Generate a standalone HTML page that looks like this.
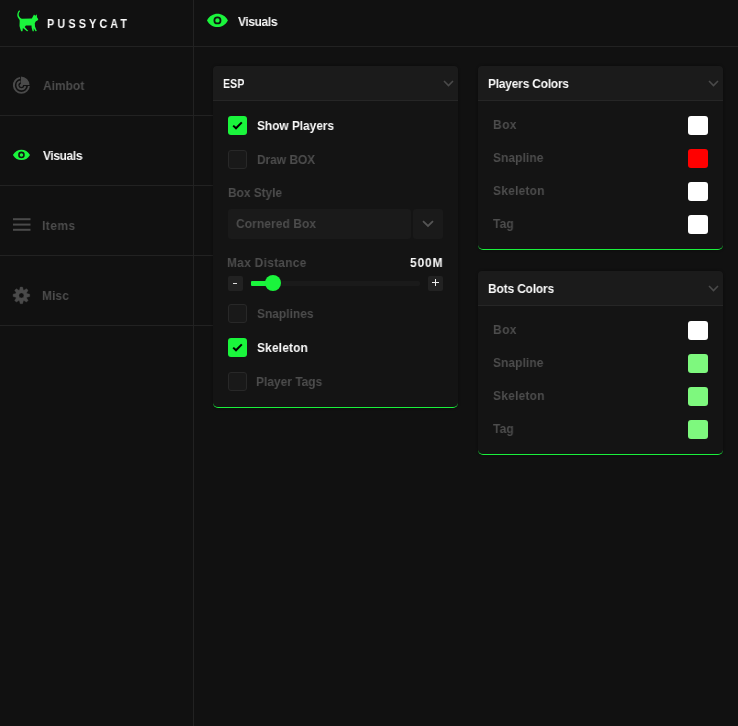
<!DOCTYPE html>
<html><head><meta charset="utf-8">
<style>
*{box-sizing:border-box;margin:0;padding:0}
html,body{width:738px;height:726px;overflow:hidden;background:#111111;font-family:"Liberation Sans",sans-serif;font-weight:bold;font-size:13px}
.a{position:absolute}
.hl{position:absolute;height:1px;background:#222222}
.vl{position:absolute;width:1px;background:#222222}
.t{position:absolute;white-space:nowrap;line-height:1;letter-spacing:0;margin-top:-1px;will-change:transform;transform:scaleX(0.92);transform-origin:0 0}
.g{color:#4d4d4d}
.w{color:#fafafa}
.panel{position:absolute;background:#141414;border-radius:5px;box-shadow:0 0 3px rgba(0,0,0,0.45);border-bottom:1px solid #1af03c}
.ph{position:absolute;left:0;top:0;right:0;height:35px;background:#1b1b1b;border-bottom:1px solid #262626;border-radius:4px 4px 0 0}
.cb{position:absolute;width:19px;height:19px;border-radius:3px;background:#191919;border:1px solid #282828}
.cb.on{background:#1af53c;border:none}
.sw{position:absolute;width:20px;height:19px;border-radius:3px}
</style></head><body>
<!-- lines -->
<div class="vl" style="left:193px;top:0;height:726px"></div>
<div class="hl" style="left:0;top:46px;width:738px"></div>
<div class="hl" style="left:0;top:115px;width:213px"></div>
<div class="hl" style="left:0;top:185px;width:213px"></div>
<div class="hl" style="left:0;top:255px;width:213px"></div>
<div class="hl" style="left:0;top:325px;width:213px"></div>

<!-- brand -->
<svg class="a" style="left:16px;top:10px" width="24" height="22" viewBox="16 10 24 22"><path fill="#1af53c" d="M19.0 10.6C19.6 10.3 20.3 11.0 19.9 11.6C18.9 12.7 18.5 14.0 18.8 15.4C19.2 16.9 20.4 18.0 21.8 18.7L31.8 18.6L34.0 14.4L35.3 15.8L36.8 14.3L37.0 17.2L38.3 19.3L37.5 20.5L35.9 21.3L34.8 23.3L35.0 26.4L36.8 30.9L35.5 31.2L33.7 28.3L33.9 31.2L32.6 31.2L31.6 27.6L31.5 25.4L25.9 25.4L24.7 27.1L28.3 30.9L27.0 31.2L22.9 27.9L22.5 31.2L21.1 31.2L20.2 28.6L19.5 26.0L19.7 20.6C19.6 19.7 19.0 18.9 18.4 18.3C17.3 16.9 17.0 14.7 17.6 13.0C18.0 11.9 18.4 11.0 19.0 10.6Z"/></svg>
<div class="t w" style="left:47px;top:19px;font-size:12px;letter-spacing:3.5px;transform:scaleX(0.9);transform-origin:0 0">PUSSYCAT</div>

<!-- sidebar items -->
<svg class="a" style="left:10px;top:74px" width="24" height="22" viewBox="10 74 24 22"><g fill="none" stroke="#4a4a4a" stroke-width="1.9"><path d="M20.09 77.86A7.55 7.55 0 1 0 28.92 85.96"/><path d="M20.43 81.42A4.0 4.0 0 1 0 25.31 86.13"/></g><circle cx="21.4" cy="85.3" r="1.6" fill="#4a4a4a"/><path d="M20.9 85.1V76.50A8.6 8.6 0 0 1 29.50 85.1Z" fill="#4a4a4a"/></svg>
<div class="t g" style="left:43.4px;top:80px;letter-spacing:0px">Aimbot</div>

<svg class="a" style="left:10px;top:147px" width="22" height="15" viewBox="10 147 22 15"><path fill="#1af53c" fill-rule="evenodd" d="M12.90 154.90C16.66 147.98 26.24 147.98 30.00 154.90C26.24 161.82 16.66 161.82 12.90 154.90ZM18.15 154.90a3.3 3.3 0 1 0 6.60 0a3.3 3.3 0 1 0 -6.60 0ZM19.70 154.90a1.75 1.75 0 1 0 3.50 0a1.75 1.75 0 1 0 -3.50 0Z"/></svg>
<div class="t w" style="left:43.4px;top:150px;letter-spacing:-0.4px">Visuals</div>

<svg class="a" style="left:13px;top:218px" width="18" height="13" viewBox="0 0 18 13">
<g fill="#4a4a4a"><rect x="0" y="0.2" width="17.5" height="2"/><rect x="0" y="5.6" width="17.5" height="2"/><rect x="0" y="10.8" width="17.5" height="2"/></g>
</svg>
<div class="t g" style="left:42.4px;top:220px;letter-spacing:0.5px">Items</div>

<svg class="a" style="left:10px;top:284px" width="24" height="23" viewBox="10 284 24 23"><path fill="#4a4a4a" fill-rule="evenodd" stroke="#4a4a4a" stroke-width="0.4" stroke-linejoin="round" d="M19.51 289.92L20.23 287.08L22.57 287.08L23.29 289.92L23.94 290.19L26.46 288.69L28.11 290.34L26.61 292.86L26.88 293.51L29.72 294.23L29.72 296.57L26.88 297.29L26.61 297.94L28.11 300.46L26.46 302.11L23.94 300.61L23.29 300.88L22.57 303.72L20.23 303.72L19.51 300.88L18.86 300.61L16.34 302.11L14.69 300.46L16.19 297.94L15.92 297.29L13.08 296.57L13.08 294.23L15.92 293.51L16.19 292.86L14.69 290.34L16.34 288.69L18.86 290.19ZM18.9 295.4a2.5 2.5 0 1 0 5.0 0a2.5 2.5 0 1 0 -5.0 0Z"/></svg>
<div class="t g" style="left:42.4px;top:290px;letter-spacing:0.07px">Misc</div>

<!-- content header -->
<svg class="a" style="left:205px;top:11px" width="25" height="18" viewBox="205 11 25 18"><path fill="#1af53c" fill-rule="evenodd" d="M207.00 20.40C211.60 11.62 223.30 11.62 227.90 20.40C223.30 29.18 211.60 29.18 207.00 20.40ZM213.50 20.40a3.95 3.95 0 1 0 7.90 0a3.95 3.95 0 1 0 -7.90 0ZM215.25 20.40a2.2 2.2 0 1 0 4.40 0a2.2 2.2 0 1 0 -4.40 0Z"/></svg>
<div class="t w" style="left:238.4px;top:16px;letter-spacing:-0.4px">Visuals</div>


<!-- ESP panel -->
<div class="panel" style="left:213px;top:66px;width:245px;height:342px"></div>
<div class="a" style="left:213px;top:66px;width:245px;height:34px;background:#1b1b1b;border-radius:4px 4px 0 0"></div>
<div class="hl" style="left:213px;top:100px;width:245px;background:#262626"></div>
<div class="t w" style="left:223px;top:78px;letter-spacing:0.2px;transform:scaleX(0.81)">ESP</div>
<svg class="a" style="left:443px;top:80px" width="11" height="7" viewBox="0 0 11 7"><path d="M1 1L5.5 5.5L10 1" fill="none" stroke="#4a4a4a" stroke-width="1.6"/></svg>

<div class="cb on" style="left:228px;top:116px"></div>
<svg class="a" style="left:228px;top:116px" width="19" height="19" viewBox="0 0 19 19"><path d="M5.2 9.6L8 12.3L13.8 6.4" fill="none" stroke="#000" stroke-width="2"/></svg>
<div class="t w" style="left:257.1px;top:120px;letter-spacing:-0.07px">Show Players</div>

<div class="cb" style="left:228px;top:150px"></div>
<div class="t g" style="left:256.6px;top:154px;letter-spacing:-0.04px">Draw BOX</div>

<div class="t g" style="left:227.8px;top:187px;letter-spacing:-0.06px">Box Style</div>
<div class="a" style="left:228px;top:209px;width:183px;height:30px;background:#1a1a1a;border-radius:3px"></div>
<div class="t g" style="left:236.1px;top:218px;letter-spacing:0.09px">Cornered Box</div>
<div class="a" style="left:413px;top:209px;width:30px;height:30px;background:#1a1a1a;border-radius:3px"></div>
<svg class="a" style="left:422px;top:220px" width="12" height="8" viewBox="0 0 12 8"><path d="M1 1.2L6 6L11 1.2" fill="none" stroke="#555" stroke-width="1.8"/></svg>

<div class="t g" style="left:227.4px;top:257px;letter-spacing:0.29px">Max Distance</div>
<div class="t w" style="left:410.4px;top:257px;letter-spacing:0.95px">500M</div>
<div class="a" style="left:228px;top:276px;width:15px;height:15px;background:#222;border-radius:2px"></div>
<div class="a" style="left:233.3px;top:283px;width:4px;height:1.3px;background:#ddd"></div>
<div class="a" style="left:251px;top:281px;width:169px;height:5px;background:#1a1a1a;border-radius:2px"></div>
<div class="a" style="left:251px;top:281px;width:22px;height:5px;background:#1af53c;border-radius:1px"></div>
<div class="a" style="left:264.6px;top:274.6px;width:16.6px;height:16.6px;background:#1af53c;border-radius:50%"></div>
<div class="a" style="left:428px;top:276px;width:15px;height:15px;background:#222;border-radius:2px"></div>
<div class="a" style="left:432px;top:281.8px;width:7px;height:1.4px;background:#eee"></div>
<div class="a" style="left:434.8px;top:279px;width:1.4px;height:7px;background:#eee"></div>

<div class="cb" style="left:228px;top:304px"></div>
<div class="t g" style="left:257px;top:308px;letter-spacing:0px">Snaplines</div>
<div class="cb on" style="left:228px;top:338px"></div>
<svg class="a" style="left:228px;top:338px" width="19" height="19" viewBox="0 0 19 19"><path d="M5.2 9.6L8 12.3L13.8 6.4" fill="none" stroke="#000" stroke-width="2"/></svg>
<div class="t w" style="left:257px;top:342px;letter-spacing:0.16px">Skeleton</div>
<div class="cb" style="left:228px;top:372px"></div>
<div class="t g" style="left:256px;top:376px;letter-spacing:0px">Player Tags</div>

<!-- Players Colors -->
<div class="panel" style="left:478px;top:66px;width:245px;height:184px"></div>
<div class="a" style="left:478px;top:66px;width:245px;height:34px;background:#1b1b1b;border-radius:4px 4px 0 0"></div>
<div class="hl" style="left:478px;top:100px;width:245px;background:#262626"></div>
<div class="t w" style="left:487.6px;top:78px;letter-spacing:-0.23px">Players Colors</div>
<svg class="a" style="left:708px;top:80px" width="11" height="7" viewBox="0 0 11 7"><path d="M1 1L5.5 5.5L10 1" fill="none" stroke="#4a4a4a" stroke-width="1.6"/></svg>
<div class="t g" style="left:492.5px;top:119px;letter-spacing:0.5px">Box</div>
<div class="sw" style="left:688px;top:116px;background:#fff"></div>
<div class="t g" style="left:493px;top:152px;letter-spacing:0.09px">Snapline</div>
<div class="sw" style="left:688px;top:149px;background:#ff0000"></div>
<div class="t g" style="left:493px;top:185px;letter-spacing:0.25px">Skeleton</div>
<div class="sw" style="left:688px;top:182px;background:#fff"></div>
<div class="t g" style="left:493px;top:218px;letter-spacing:0.15px">Tag</div>
<div class="sw" style="left:688px;top:215px;background:#fff"></div>

<!-- Bots Colors -->
<div class="panel" style="left:478px;top:271px;width:245px;height:184px"></div>
<div class="a" style="left:478px;top:271px;width:245px;height:34px;background:#1b1b1b;border-radius:4px 4px 0 0"></div>
<div class="hl" style="left:478px;top:305px;width:245px;background:#262626"></div>
<div class="t w" style="left:487.6px;top:283px;letter-spacing:-0.17px">Bots Colors</div>
<svg class="a" style="left:708px;top:285px" width="11" height="7" viewBox="0 0 11 7"><path d="M1 1L5.5 5.5L10 1" fill="none" stroke="#4a4a4a" stroke-width="1.6"/></svg>
<div class="t g" style="left:492.5px;top:324px;letter-spacing:0.5px">Box</div>
<div class="sw" style="left:688px;top:321px;background:#fff"></div>
<div class="t g" style="left:493px;top:357px;letter-spacing:0.09px">Snapline</div>
<div class="sw" style="left:688px;top:354px;background:#7ef87e"></div>
<div class="t g" style="left:493px;top:390px;letter-spacing:0.25px">Skeleton</div>
<div class="sw" style="left:688px;top:387px;background:#7ef87e"></div>
<div class="t g" style="left:493px;top:423px;letter-spacing:0.15px">Tag</div>
<div class="sw" style="left:688px;top:420px;background:#7ef87e"></div>
</body></html>
